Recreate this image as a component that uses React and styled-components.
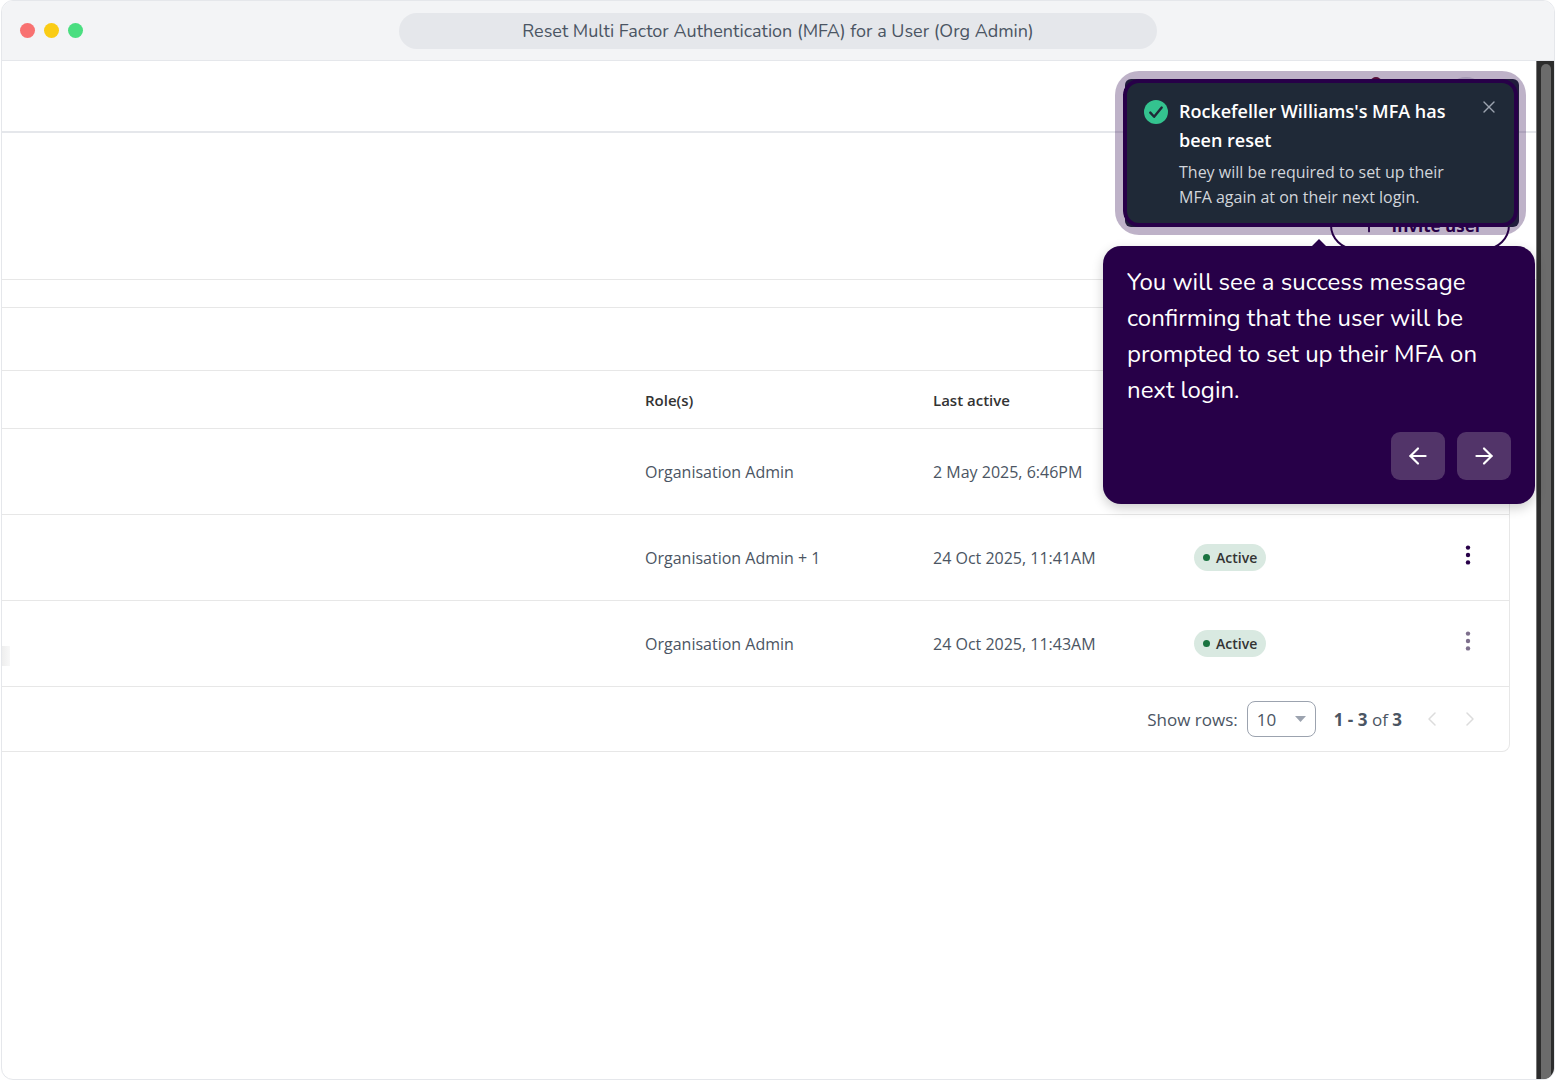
import React from 'react';
import styled, { createGlobalStyle } from 'styled-components';
import { ArrowLeft, ArrowRight, ChevronLeft, ChevronRight, Plus, X } from 'lucide-react';

const GlobalStyle = createGlobalStyle`
*{
box-sizing:border-box;
}
body{
margin:0;
background-color:#fff;
font-family:"Open Sans","Noto Sans",sans-serif;
color:#4b5563;
}
button,select{
font-family:inherit;
}
`

const Frame = styled.div`
display:flex;
flex-direction:column;
height:100vh;
margin:0 1px;
border:1px solid #e5e7eb;
border-radius:12px;
overflow:hidden;
`

const TitleBar = styled.header`
display:grid;
grid-template-columns:1fr 2fr 1fr;
align-items:center;
height:60px;
padding:0 18px;
background-color:#f3f4f6;
border-bottom:1px solid #e5e7eb;
`

const Lights = styled.div`
display:flex;
gap:9px;
`

const Light = styled.span`
width:15px;
height:15px;
border-radius:50%;
background-color:${({ color }) => color};
`

const Title = styled.h1`
margin:0;
border-radius:18px;
background-color:#e5e7eb;
font-family:Nunito,Lato,sans-serif;
font-size:18px;
font-weight:400;
line-height:36px;
text-align:center;
`

const Body = styled.div`
position:relative;
display:flex;
flex:1;
min-height:0;
`

const Page = styled.main`
flex:1;
min-width:0;
`

const TopBar = styled.div`
display:flex;
justify-content:flex-end;
align-items:center;
gap:60px;
height:72px;
padding:0 50px;
border-bottom:2px solid #e5e7eb;
`

const Avatar = styled.span`
width:${({ $size }) => $size}px;
height:38px;
border-radius:50%;
background-color:${({ color }) => color};
`

const Heading = styled.div`
display:flex;
justify-content:flex-end;
align-items:flex-end;
height:147px;
padding:0 26px 29px;
border-bottom:1px solid #e7e7e7;
`

const InviteButton = styled.button`
display:flex;
justify-content:center;
align-items:center;
gap:12px;
width:180px;
height:50px;
border:2px solid #270048;
border-radius:25px;
background-color:#fff;
color:#270048;
font-size:17px;
font-weight:700;
`

const Card = styled.section`
margin:27px 26px 0 0;
border:1px solid #e7e7e7;
border-left:none;
border-radius:0 8px 8px 0;
`

const Toolbar = styled.div`
height:63px;
border-bottom:1px solid #e7e7e7;
`

const Table = styled.table`
width:100%;
table-layout:fixed;
border-collapse:separate;
border-spacing:0;
`

const Th = styled.th`
width:${({ $width }) => $width || 'auto'};
height:58px;
padding:0 24px;
border-bottom:1px solid #e7e7e7;
color:#333;
font-size:15px;
font-weight:600;
text-align:left;
`

const Td = styled.td`
height:86px;
padding:0 24px;
border-bottom:1px solid #e7e7e7;
font-size:16px;
`

const NameCell = styled(Td)`
background:${({ $shade }) => $shade ? 'linear-gradient(90deg,#eee,#f8f8f8) left bottom 20px / 8px 20px no-repeat' : 'none'};
`

const ActionCell = styled(Td)`
padding:0 29px 0 0;
text-align:right;
`

const Badge = styled.span`
display:inline-flex;
align-items:center;
gap:6px;
height:27px;
padding:0 9px;
border-radius:14px;
background-color:#d9e9e1;
color:#333;
font-size:14px;
font-weight:600;
`

const Dot = styled.span`
width:7px;
height:7px;
border-radius:50%;
background-color:#1a7340;
`

const IconButton = styled.button`
display:inline-flex;
justify-content:center;
align-items:center;
padding:0;
border:none;
background:none;
color:${({ color }) => color};
`

const Footer = styled.div`
display:flex;
justify-content:flex-end;
align-items:center;
gap:9px;
height:64px;
padding-right:27px;
font-size:17px;
`

const SelectBox = styled.div`
display:grid;
align-items:center;
width:69px;
svg{
grid-area:1/1;
justify-self:end;
margin-right:10px;
pointer-events:none;
}
`

const Select = styled.select`
grid-area:1/1;
appearance:none;
height:36px;
padding:0 9px;
border:1px solid #9ca3af;
border-radius:8px;
background-color:#fff;
color:#4b5563;
font-size:17px;
`

const Range = styled.span`
margin:0 9px;
`

const Pager = styled.div`
display:flex;
gap:14px;
`

const ScrollTrack = styled.div`
width:18px;
padding:3px 3px 0 4px;
border-left:1px solid #777;
background-color:#2c2c2c;
`

const ScrollThumb = styled.div`
height:100%;
border-radius:5px 5px 0 0;
background-color:#6b6b6b;
`

const Toast = styled.div`
position:absolute;
top:18px;
right:35px;
display:flex;
align-items:flex-start;
gap:11px;
width:394px;
padding:18px 20px 17px 19px;
border-radius:6px;
background-color:#1f2937;
`

const Highlight = styled.div`
position:absolute;
inset:0 1px 0 -2px;
border:4px solid #270048;
border-radius:16px;
box-shadow:0 0 0 8px rgba(39,0,72,0.3);
pointer-events:none;
`

const ToastIcon = styled.span`
display:flex;
align-items:center;
height:29px;
`

const ToastText = styled.div`
flex:1;
`

const ToastTitle = styled.h2`
margin:0;
color:#fff;
font-size:18px;
font-weight:600;
line-height:29px;
`

const ToastMessage = styled.p`
margin:5px 0 0;
color:#d1d5db;
font-size:16px;
line-height:25px;
`

const Popover = styled.aside`
position:absolute;
top:185px;
right:19px;
width:432px;
padding:18px 24px 24px;
border-radius:18px;
background-color:#270048;
box-shadow:0 4px 12px rgba(0,0,0,0.2);
&::before{
content:"";
position:absolute;
top:-7px;
left:50%;
margin-left:-8px;
border:solid transparent;
border-width:0 8px 8px;
border-bottom-color:#270048;
}
`

const PopoverText = styled.p`
margin:0;
color:#fff;
font-family:Nunito,Lato,sans-serif;
font-size:24px;
line-height:36px;
`

const Steps = styled.div`
display:flex;
justify-content:flex-end;
gap:12px;
margin-top:24px;
`

const StepButton = styled.button`
display:flex;
justify-content:center;
align-items:center;
width:54px;
height:48px;
padding:0;
border:none;
border-radius:9px;
background-color:#523469;
color:#fff;
`

const users = [
    { role: 'Organisation Admin', lastActive: '2 May 2025, 6:46PM', menu: '#270048' },
    { role: 'Organisation Admin + 1', lastActive: '24 Oct 2025, 11:41AM', menu: '#270048' },
    { role: 'Organisation Admin', lastActive: '24 Oct 2025, 11:43AM', menu: '#7d6f8c', shade: true },
]

const KebabIcon = () => (
    <svg width="24" height="24" viewBox="0 0 24 24" fill="currentColor">
        <circle cx="12" cy="4.600" r="2.200" />
        <circle cx="12" cy="12" r="2.200" />
        <circle cx="12" cy="19.400" r="2.200" />
    </svg>
)

const CheckIcon = () => (
    <svg width="24" height="24" viewBox="0 0 24 24" fill="none">
        <circle cx="12" cy="12" r="12" fill="#34c38f" />
        <path d="M6.3 12.6l3.8 4.2 7.6-9.2" stroke="#1f2937" strokeWidth="2.4" strokeLinecap="round" strokeLinejoin="round" />
    </svg>
)

const UserRow = ({ role, lastActive, menu, shade }) => (
    <tr>
        <NameCell $shade={shade} />
        <Td>{role}</Td>
        <Td>{lastActive}</Td>
        <Td><Badge><Dot />Active</Badge></Td>
        <ActionCell>
            <IconButton color={menu} aria-label="User actions"><KebabIcon /></IconButton>
        </ActionCell>
    </tr>
)

const App = () => {
    return <>
        <GlobalStyle />
        <Frame>
            <TitleBar>
                <Lights>
                    <Light color="#f87171" />
                    <Light color="#facc15" />
                    <Light color="#4ade80" />
                </Lights>
                <Title>Reset Multi Factor Authentication (MFA) for a User (Org Admin)</Title>
            </TitleBar>
            <Body>
                <Page>
                    <TopBar>
                        <Avatar color="#6b1230" $size={20} />
                        <Avatar color="#dcdce4" $size={40} />
                    </TopBar>
                    <Heading>
                        <InviteButton><Plus size={22} />Invite user</InviteButton>
                    </Heading>
                    <Card>
                        <Toolbar />
                        <Table>
                            <thead>
                                <tr>
                                    <Th />
                                    <Th $width="288px">Role(s)</Th>
                                    <Th $width="261px">Last active</Th>
                                    <Th $width="180px" />
                                    <Th $width="159px" />
                                </tr>
                            </thead>
                            <tbody>
                                {users.map((user) => <UserRow key={user.lastActive} {...user} />)}
                            </tbody>
                        </Table>
                        <Footer>
                            <label htmlFor="rows">Show rows:</label>
                            <SelectBox>
                                <Select id="rows" defaultValue="10">
                                    <option>10</option>
                                    <option>25</option>
                                    <option>50</option>
                                </Select>
                                <svg width="11" height="6" viewBox="0 0 11 6" fill="#9ca3af"><path d="M0 0h11L5.500 6z" /></svg>
                            </SelectBox>
                            <Range><b>1 - 3</b> of <b>3</b></Range>
                            <Pager>
                                <IconButton color="#dcdcdc" aria-label="Previous page"><ChevronLeft size={24} strokeWidth={1.5} /></IconButton>
                                <IconButton color="#dcdcdc" aria-label="Next page"><ChevronRight size={24} strokeWidth={1.5} /></IconButton>
                            </Pager>
                        </Footer>
                    </Card>
                </Page>
                <ScrollTrack><ScrollThumb /></ScrollTrack>
                <Toast role="status">
                    <ToastIcon><CheckIcon /></ToastIcon>
                    <ToastText>
                        <ToastTitle>Rockefeller Williams's MFA has been reset</ToastTitle>
                        <ToastMessage>They will be required to set up their MFA again at on their next login.</ToastMessage>
                    </ToastText>
                    <IconButton color="#9ca3af" aria-label="Dismiss"><X size={20} strokeWidth={1.6} /></IconButton>
                    <Highlight />
                </Toast>
                <Popover>
                    <PopoverText>You will see a success message confirming that the user will be prompted to set up their MFA on next login.</PopoverText>
                    <Steps>
                        <StepButton aria-label="Back"><ArrowLeft size={26} /></StepButton>
                        <StepButton aria-label="Next"><ArrowRight size={26} /></StepButton>
                    </Steps>
                </Popover>
            </Body>
        </Frame>
    </>;
};

export default App;
